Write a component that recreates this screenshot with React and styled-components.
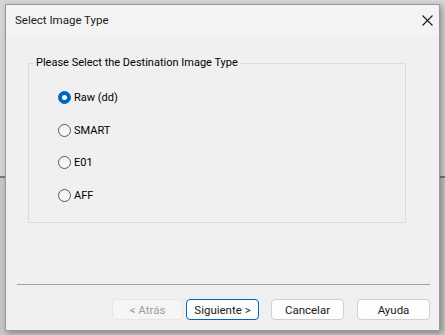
import React from "react";
import styled, { createGlobalStyle } from "styled-components";

const Global = createGlobalStyle`
  html, body { margin: 0; padding: 0; }
  body {
    width: 445px;
    height: 335px;
    overflow: hidden;
    background: linear-gradient(to bottom, #d6d6d6 0, #d6d6d6 176px, #7a7a7a 176px, #7a7a7a 178px, #c6c6c6 178px);
    font-family: Roboto, "Noto Sans", sans-serif;
    font-size: 11.5px;
    color: #000;
  }
  #root { padding: 4px 0 0 5px; }
`;

const Dialog = styled.div`
  box-sizing: border-box;
  width: 435px;
  height: 327px;
  background: #f0f0f0;
  border: 1px solid #9a9a9a;
  box-shadow: 2px 2px 6px rgba(0, 0, 0, 0.35);
  display: flex;
  flex-direction: column;
`;

const TitleBar = styled.div`
  height: 30px;
  background: #f3f3f3;
  display: flex;
  align-items: center;
  justify-content: space-between;
  padding: 0 4px 0 9px;
`;

const Title = styled.span`
  font-size: 11.5px;
  color: #1a1a1a;
`;

const CloseButton = styled.div`
  width: 16px;
  height: 16px;
  display: flex;
  align-items: center;
  justify-content: center;
`;

const Body = styled.div`
  flex: 1;
  display: flex;
  flex-direction: column;
  padding: 20px 9px 0 11px;
`;

const GroupBox = styled.fieldset`
  box-sizing: border-box;
  margin: 0 0 0 11px;
  width: 378px;
  height: 168px;
  flex: none;
  border: 1px solid #dcdcdc;
  padding: 0;
`;

const Legend = styled.legend`
  padding: 0 2px;
  margin-left: 5px;
  line-height: 16px;
  font-size: 11px;
`;

const RadioList = styled.div`
  display: flex;
  flex-direction: column;
  padding: 10px 0 0 29px;
`;

const RadioRow = styled.label`
  height: 32.8px;
  flex: none;
  display: flex;
  align-items: center;
  gap: 3px;
  font-size: 11px;
`;

const RadioCircle = styled.span`
  box-sizing: border-box;
  width: 13px;
  height: 13px;
  border-radius: 50%;
  flex: none;
  display: flex;
  align-items: center;
  justify-content: center;
  background: ${(p) => (p.$checked ? "#0067c0" : "#f5f5f5")};
  border: 1px solid ${(p) => (p.$checked ? "#0067c0" : "#5a5a5a")};
  &::after {
    content: "";
    display: ${(p) => (p.$checked ? "block" : "none")};
    width: 5px;
    height: 5px;
    border-radius: 50%;
    background: #fff;
  }
`;

const Separator = styled.div`
  margin-top: 61px;
  height: 1px;
  background: #a0a0a0;
`;

const ButtonRow = styled.div`
  margin-top: 14px;
  display: flex;
  justify-content: flex-end;
`;

const Button = styled.div`
  box-sizing: border-box;
  width: ${(p) => p.$w || 72}px;
  height: 21px;
  margin-left: ${(p) => p.$gap || 0}px;
  border-radius: 4px;
  display: flex;
  align-items: center;
  justify-content: center;
  font-size: 11.5px;
  background: ${(p) => (p.$disabled ? "#f5f5f5" : "#fdfdfd")};
  color: ${(p) => (p.$disabled ? "#9d9d9d" : "#1b1b1b")};
  border: 1px solid
    ${(p) => (p.$default ? "#0067c0" : p.$disabled ? "#e6e6e6" : "#d0d0d0")};
`;

const options = ["Raw (dd)", "SMART", "E01", "AFF"];

export default function App() {
  return (
    <>
      <Global />
      <Dialog>
        <TitleBar>
          <Title>Select Image Type</Title>
          <CloseButton>
            <svg width="11" height="11" viewBox="0 0 11 11">
              <path d="M0.5 0.5 L10.5 10.5 M10.5 0.5 L0.5 10.5" stroke="#1a1a1a" strokeWidth="1.1" fill="none" />
            </svg>
          </CloseButton>
        </TitleBar>
        <Body>
          <GroupBox>
            <Legend>Please Select the Destination Image Type</Legend>
            <RadioList>
              {options.map((o, i) => (
                <RadioRow key={o}>
                  <RadioCircle $checked={i === 0} />
                  {o}
                </RadioRow>
              ))}
            </RadioList>
          </GroupBox>
          <Separator />
          <ButtonRow>
            <Button $w={71} $disabled>&lt; Atrás</Button>
            <Button $w={73} $gap={3} $default>Siguiente &gt;</Button>
            <Button $w={73} $gap={12}>Cancelar</Button>
            <Button $w={73} $gap={13}>Ayuda</Button>
          </ButtonRow>
        </Body>
      </Dialog>
    </>
  );
}
